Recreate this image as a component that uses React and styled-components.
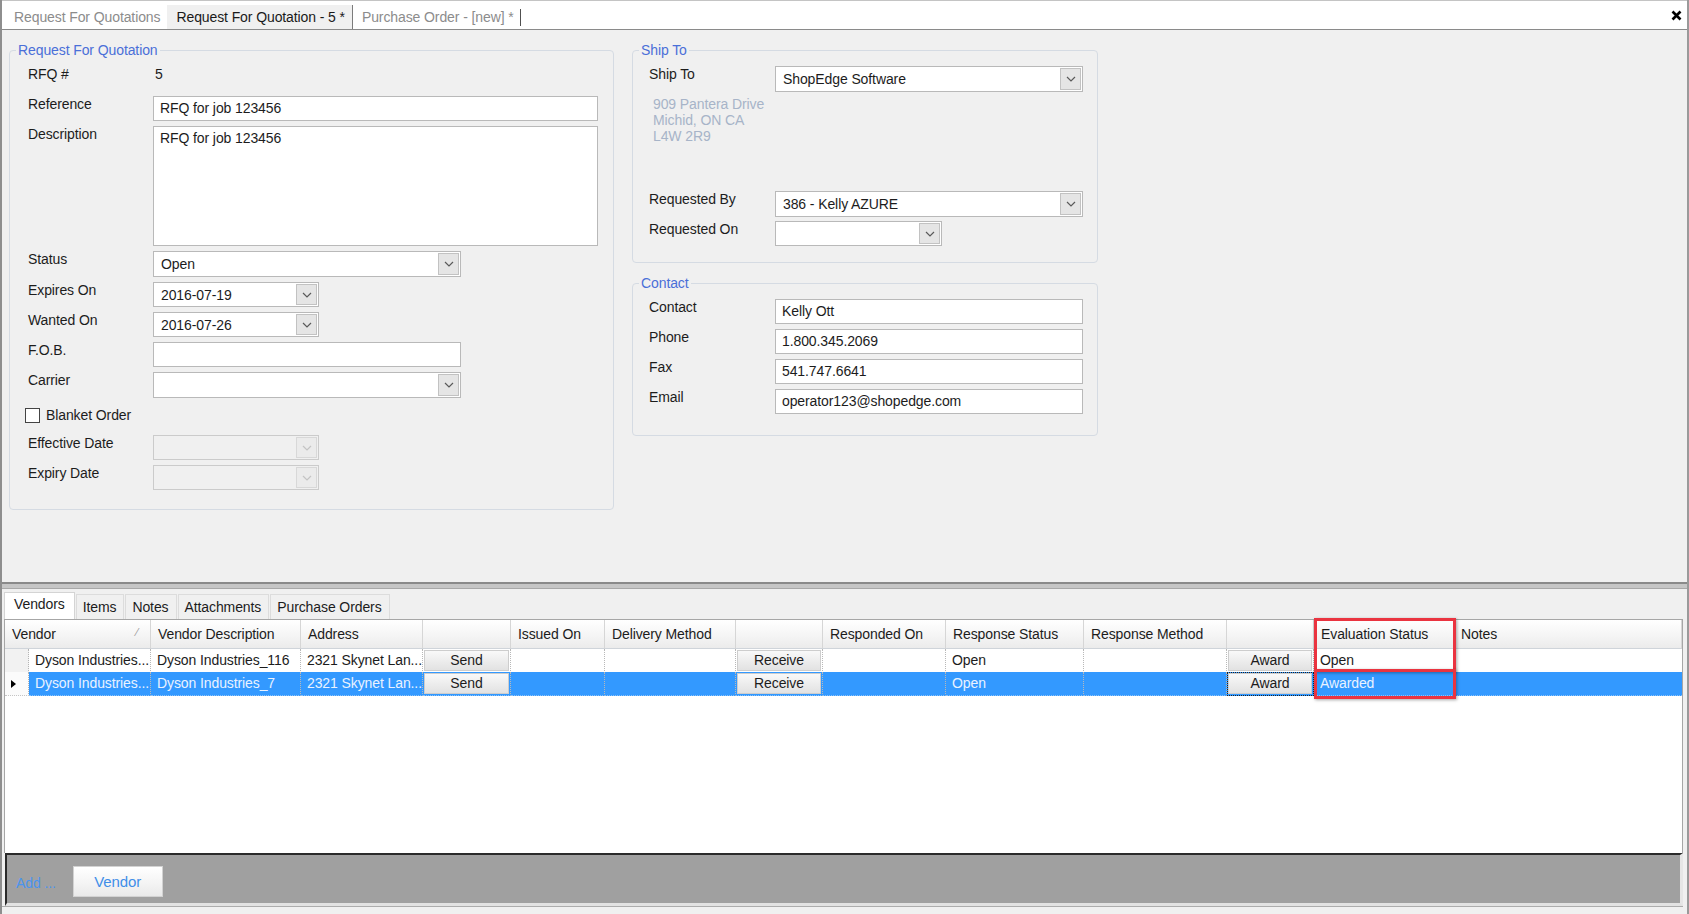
import React from "react";
import styled, { createGlobalStyle, css } from "styled-components";

const GlobalStyle = createGlobalStyle`
  html, body {
    margin: 0;
    padding: 0;
    background: #f0f0f0;
  }
  body {
    font-family: "Liberation Sans", Arial, sans-serif;
    font-size: 14px;
    letter-spacing: -0.1px;
    color: #1c1c1c;
    overflow: hidden;
  }
  * {
    box-sizing: border-box;
  }
`;

const COLS =
  "24px 122px 150px 122px 88px 94px 131px 87px 123px 138px 143px 87px 140px 1fr";

const HEADERS = [
  "Vendor",
  "Vendor Description",
  "Address",
  "",
  "Issued On",
  "Delivery Method",
  "",
  "Responded On",
  "Response Status",
  "Response Method",
  "",
  "Evaluation Status",
  "Notes",
];

const ROWS = [
  {
    vendor: "Dyson Industries...",
    description: "Dyson Industries_116",
    address: "2321 Skynet Lan...",
    response: "Open",
    evaluation: "Open",
  },
  {
    vendor: "Dyson Industries...",
    description: "Dyson Industries_7",
    address: "2321 Skynet Lan...",
    response: "Open",
    evaluation: "Awarded",
    selected: true,
  },
];

function Chevron({ disabled }) {
  return (
    <svg width="10" height="6" viewBox="0 0 10 6">
      <path
        d="M1 1 L5 5 L9 1"
        fill="none"
        stroke={disabled ? "#c4c4c4" : "#5a5a5a"}
        strokeWidth="1.2"
      />
    </svg>
  );
}

function Combo({ value, w, h, disabled }) {
  return (
    <ComboBox $w={w} $h={h} $disabled={disabled}>
      <ComboText>{value}</ComboText>
      <DropButton $disabled={disabled}>
        <Chevron disabled={disabled} />
      </DropButton>
    </ComboBox>
  );
}

export default function App() {
  return (
    <>
      <GlobalStyle />
      <Window>
        <DocTabs>
          <DocTab>Request For Quotations</DocTab>
          <DocTab $active>Request For Quotation - 5 *</DocTab>
          <DocTab>
            Purchase Order - [new] *<Caret />
          </DocTab>
          <CloseButton>
            <svg width="11" height="11" viewBox="0 0 11 11">
              <path
                d="M1.5 1.5 L9.5 9.5 M9.5 1.5 L1.5 9.5"
                stroke="#000"
                strokeWidth="2.6"
              />
            </svg>
          </CloseButton>
        </DocTabs>

        <TopPanel>
          <Group $w={605}>
            <Legend>Request For Quotation</Legend>
            <GroupBody $pad="8px 15px 19px 18px">
              <Form $label={125} $gap={5}>
                <Label>RFQ #</Label>
                <Value>5</Value>

                <Label>Reference</Label>
                <TextBox $w={445}>RFQ for job 123456</TextBox>

                <Label>Description</Label>
                <TextArea $w={445}>RFQ for job 123456</TextArea>

                <Label>Status</Label>
                <Combo value="Open" w={308} h={26} />

                <Label>Expires On</Label>
                <Combo value="2016-07-19" w={166} />

                <Label>Wanted On</Label>
                <Combo value="2016-07-26" w={166} />

                <Label>F.O.B.</Label>
                <TextBox $w={308} />

                <Label>Carrier</Label>
                <Combo value="" w={308} h={26} />

                <CheckRow>
                  <CheckBox />
                  <span>Blanket Order</span>
                </CheckRow>

                <Label>Effective Date</Label>
                <Combo value="" w={166} disabled />

                <Label>Expiry Date</Label>
                <Combo value="" w={166} disabled />
              </Form>
            </GroupBody>
          </Group>

          <RightColumn>
            <Group $w={466}>
              <Legend>Ship To</Legend>
              <GroupBody $pad="8px 14px 16px 16px">
                <Form $label={126} $gap={4}>
                  <Label>Ship To</Label>
                  <Combo value="ShopEdge Software" w={308} h={26} />

                  <Address>
                    909 Pantera Drive
                    <br />
                    Michid, ON CA
                    <br />
                    L4W 2R9
                  </Address>

                  <Label>Requested By</Label>
                  <Combo value="386 - Kelly AZURE" w={308} h={26} />

                  <Label>Requested On</Label>
                  <Combo value="" w={167} />
                </Form>
              </GroupBody>
            </Group>

            <Group $w={466}>
              <Legend>Contact</Legend>
              <GroupBody $pad="8px 14px 21px 16px">
                <Form $label={126} $gap={5}>
                  <Label>Contact</Label>
                  <TextBox $w={308}>Kelly Ott</TextBox>

                  <Label>Phone</Label>
                  <TextBox $w={308}>1.800.345.2069</TextBox>

                  <Label>Fax</Label>
                  <TextBox $w={308}>541.747.6641</TextBox>

                  <Label>Email</Label>
                  <TextBox $w={308}>operator123@shopedge.com</TextBox>
                </Form>
              </GroupBody>
            </Group>
          </RightColumn>
        </TopPanel>

        <Splitter />

        <BottomPanel>
          <PageTabs>
            <PageTab $active>Vendors</PageTab>
            <PageTab>Items</PageTab>
            <PageTab>Notes</PageTab>
            <PageTab>Attachments</PageTab>
            <PageTab>Purchase Orders</PageTab>
          </PageTabs>

          <GridFrame>
            <GridRow $header>
              {HEADERS.map((title, i) => (
                <HeaderCell key={i} $span={i === 0 ? 2 : 1}>
                  {title}
                  {i === 0 && <SortGlyph>⁄</SortGlyph>}
                </HeaderCell>
              ))}
            </GridRow>

            {ROWS.map((row, i) => (
              <GridRow key={i}>
                <RowHeader $current={row.selected}>
                  {row.selected && <RowArrow />}
                </RowHeader>
                <Cell $selected={row.selected}>{row.vendor}</Cell>
                <Cell $selected={row.selected}>{row.description}</Cell>
                <Cell $selected={row.selected}>{row.address}</Cell>
                <ButtonCell $selected={row.selected}>
                  <CellButton>Send</CellButton>
                </ButtonCell>
                <Cell $selected={row.selected} />
                <Cell $selected={row.selected} />
                <ButtonCell $selected={row.selected}>
                  <CellButton>Receive</CellButton>
                </ButtonCell>
                <Cell $selected={row.selected} />
                <Cell $selected={row.selected}>{row.response}</Cell>
                <Cell $selected={row.selected} />
                <ButtonCell $selected={row.selected} $focused={row.selected}>
                  <CellButton>Award</CellButton>
                </ButtonCell>
                <Cell $selected={row.selected}>{row.evaluation}</Cell>
                <Cell $selected={row.selected} $last />
              </GridRow>
            ))}

            <Highlight $top={-2} $height={54} />
            <Highlight $top={49} $height={30} />
          </GridFrame>

          <Toolbar>
            <AddLabel>Add ...</AddLabel>
            <ToolButton>Vendor</ToolButton>
          </Toolbar>
          <BottomStrip />
        </BottomPanel>
      </Window>
    </>
  );
}

const Window = styled.div`
  width: 1689px;
  height: 914px;
  display: flex;
  flex-direction: column;
  border-left: 2px solid #8e8e8e;
  border-right: 2px solid #9a9a9a;
  background: #f0f0f0;
`;

const DocTabs = styled.div`
  height: 30px;
  flex: none;
  display: flex;
  align-items: flex-end;
  padding-left: 3px;
  background: #fff;
  border-top: 1px solid #c4c4c4;
  border-bottom: 1px solid #8a8a8a;
`;

const DocTab = styled.div`
  display: flex;
  align-items: center;
  height: 24px;
  padding: 0 7px 0 9px;
  color: #8c8c8c;
  white-space: nowrap;

  ${({ $active }) =>
    $active &&
    css`
      background: #f0f0f0;
      color: #1a1a1a;
      border-right: 1px solid #7c7c7c;
    `}
`;

const Caret = styled.span`
  display: inline-block;
  width: 1px;
  height: 17px;
  margin-left: 6px;
  background: #505050;
`;

const CloseButton = styled.div`
  margin-left: auto;
  margin-right: 5px;
  align-self: center;
  display: flex;
`;

const TopPanel = styled.div`
  height: 554px;
  flex: none;
  display: flex;
  align-items: flex-start;
  gap: 18px;
  padding: 12px 0 0 7px;
  border-bottom: 2px solid #8a8a8a;
`;

const RightColumn = styled.div`
  display: flex;
  flex-direction: column;
  gap: 12px;
`;

const Group = styled.fieldset`
  width: ${({ $w }) => $w}px;
  min-width: 0;
  margin: 0;
  padding: 0;
  border: 1px solid #d5dbe3;
  border-radius: 4px;
`;

const Legend = styled.legend`
  margin-left: 6px;
  padding: 0 2px;
  line-height: 16px;
  color: #4a6fd8;
`;

const GroupBody = styled.div`
  padding: ${({ $pad }) => $pad};
`;

const Form = styled.div`
  display: grid;
  grid-template-columns: ${({ $label }) => $label}px 1fr;
  row-gap: ${({ $gap }) => $gap}px;
  align-items: start;
`;

const Label = styled.div`
  line-height: 16px;
  white-space: nowrap;
`;

const Value = styled.div`
  height: 25px;
  line-height: 16px;
  padding-left: 2px;
`;

const TextBox = styled.div`
  width: ${({ $w }) => $w}px;
  height: 25px;
  padding: 0 6px;
  line-height: 23px;
  background: #fff;
  border: 1px solid #b9b9b9;
  white-space: nowrap;
`;

const TextArea = styled(TextBox)`
  height: 120px;
  line-height: 16px;
  padding-top: 3px;
`;

const ComboBox = styled.div`
  width: ${({ $w }) => $w}px;
  height: ${({ $h }) => $h || 25}px;
  display: flex;
  padding: 1px;
  background: ${({ $disabled }) => ($disabled ? "#f0f0f0" : "#fff")};
  border: 1px solid ${({ $disabled }) => ($disabled ? "#cbcbcb" : "#b9b9b9")};
`;

const ComboText = styled.div`
  flex: 1;
  padding-left: 6px;
  display: flex;
  align-items: center;
  white-space: nowrap;
`;

const DropButton = styled.div`
  width: 21px;
  display: flex;
  align-items: center;
  justify-content: center;
  background: ${({ $disabled }) => ($disabled ? "#ebebeb" : "#e5e5e5")};
  border: 1px solid ${({ $disabled }) => ($disabled ? "#d8d8d8" : "#c2c2c2")};
`;

const CheckRow = styled.label`
  grid-column: 1 / -1;
  height: 27px;
  display: flex;
  align-items: center;
  gap: 6px;
  margin-left: -3px;
  padding-bottom: 3px;
`;

const CheckBox = styled.span`
  width: 15px;
  height: 15px;
  background: #fff;
  border: 1px solid #444;
`;

const Address = styled.div`
  grid-column: 1 / -1;
  height: 91px;
  padding-left: 4px;
  line-height: 16px;
  color: #a7b4c8;
`;

const Splitter = styled.div`
  height: 4px;
  flex: none;
  background: #c6c6c6;
`;

const BottomPanel = styled.div`
  flex: 1;
  min-height: 0;
  display: flex;
  flex-direction: column;
  padding: 3px 4px 0 2px;
  border-top: 1px solid #a8a8a8;
`;

const PageTabs = styled.div`
  height: 27px;
  flex: none;
  display: flex;
  align-items: flex-end;
  gap: 1px;
`;

const PageTab = styled.div`
  height: 25px;
  padding: 0 7px 0 6px;
  line-height: 25px;
  background: #f0f0f0;
  border: 1px solid #dcdcdc;
  border-bottom: none;
  white-space: nowrap;

  ${({ $active }) =>
    $active &&
    css`
      height: 27px;
      line-height: 23px;
      padding: 0 9px;
      background: #fff;
      border-color: #d4d4d4;
    `}
`;

const GridFrame = styled.div`
  flex: 1;
  position: relative;
  background: #fff;
  border: 1px solid #a6a6a6;
  border-bottom: none;
`;

const GridRow = styled.div`
  display: grid;
  grid-template-columns: ${COLS};
  height: ${({ $header }) => ($header ? 29 : 23)}px;
`;

const HeaderCell = styled.div`
  grid-column: span ${({ $span }) => $span};
  position: relative;
  padding: 0 7px;
  line-height: 29px;
  white-space: nowrap;
  overflow: hidden;
  background: linear-gradient(#ffffff, #f4f4f4 60%, #ebebeb);
  border-right: 1px solid #d6d6d6;
  border-bottom: 1px solid #cfd4da;
`;

const SortGlyph = styled.span`
  position: absolute;
  right: 12px;
  top: -2px;
  font-size: 11px;
  color: #9a9a9a;
`;

const RowHeader = styled.div`
  display: flex;
  align-items: center;
  padding-left: 6px;
  background: ${({ $current }) => ($current ? "#fbfbfb" : "#f2f2f2")};
  border-right: 1px dotted #b5b5b5;
  border-bottom: 1px dotted #c5c5c5;
`;

const RowArrow = styled.span`
  width: 0;
  height: 0;
  border-top: 4px solid transparent;
  border-bottom: 4px solid transparent;
  border-left: 5px solid #000;
`;

const selectedCell = css`
  background: #3399ff;
  color: #e9f2ff;
  border-bottom-color: #8cc2f8;
`;

const Cell = styled.div`
  padding: 0 6px;
  line-height: 22px;
  white-space: nowrap;
  overflow: hidden;
  border-right: ${({ $last }) => ($last ? "none" : "1px dotted #b8b8b8")};
  border-bottom: 1px dotted #c8c8c8;
  ${({ $selected }) => $selected && selectedCell}
`;

const ButtonCell = styled.div`
  display: flex;
  padding: 1px;
  border-right: 1px dotted #b8b8b8;
  border-bottom: 1px dotted #c8c8c8;
  ${({ $selected }) => $selected && selectedCell}

  ${({ $focused }) =>
    $focused &&
    css`
      outline: 1px dotted #222;
      outline-offset: -1px;
    `}
`;

const CellButton = styled.div`
  flex: 1;
  text-align: center;
  line-height: 19px;
  color: #1c1c1c;
  background: linear-gradient(#f9f9f9, #ececec 55%, #e2e2e2);
  border: 1px solid #cdcdcd;
`;

const Highlight = styled.div`
  position: absolute;
  left: 1309px;
  width: 142px;
  top: ${({ $top }) => $top}px;
  height: ${({ $height }) => $height}px;
  border: 3px solid #ea3440;
  box-shadow: 1px 1px 3px rgba(0, 0, 0, 0.35);
  pointer-events: none;
`;

const Toolbar = styled.div`
  height: 53px;
  flex: none;
  display: flex;
  align-items: center;
  gap: 17px;
  margin-left: 1px;
  padding: 4px 0 0 9px;
  background: #a0a0a0;
  border-top: 2px solid #2a2a2a;
  border-left: 2px solid #2a2a2a;
  border-right: 3px solid #e6e6e6;
  border-bottom: 3px solid #e2e2e2;
`;

const AddLabel = styled.span`
  color: #4a94ee;
  padding-top: 3px;
`;

const ToolButton = styled.div`
  width: 90px;
  height: 31px;
  display: flex;
  align-items: center;
  justify-content: center;
  font-size: 15px;
  color: #3f8ee8;
  background: linear-gradient(#ffffff, #f3f3f3 60%, #e9e9e9);
  border: 1px solid #d2d2d2;
`;

const BottomStrip = styled.div`
  height: 8px;
  flex: none;
  margin-left: -2px;
  border-top: 1px solid #acacac;
`;
